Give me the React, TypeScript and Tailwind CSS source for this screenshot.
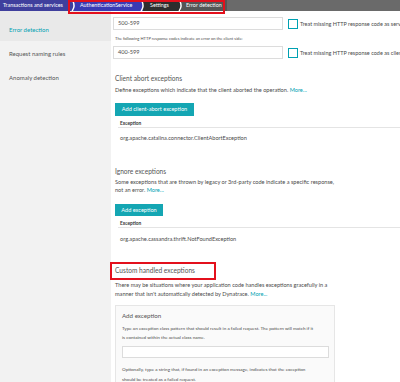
import React from "react";

const Chevron = ({ from, to }: { from: string; to: string }) => (
  <svg width="8" height="11" viewBox="0 0 8 11" className="block shrink-0">
    <rect x="0" y="0" width="4" height="11" fill={from} />
    <rect x="4" y="0" width="4" height="11" fill={to} />
    <path d="M1.5 0 Q5 5.5 1.5 11 L3 11 Q6.5 5.5 3 0 Z" fill="#ffffff" />
  </svg>
);

const Checkbox = () => (
  <div className="w-[10px] h-[10px] border border-[#00a1b2] bg-white shrink-0" />
);

export default function App() {
  return (
    <div className="relative w-[400px] h-[382px] overflow-hidden bg-white font-['Lato',sans-serif] text-[#4b4b4b]">
      {/* breadcrumb */}
      <div className="h-[11px] flex items-stretch bg-[#6a6a6a] text-white text-[5.4px] leading-[11px]">
        <div className="bg-[#3f3f9d] pl-[3px] pr-[3px] w-[70px] whitespace-nowrap">Transactions and services</div>
        <Chevron from="#3f3f9d" to="#3a3ab4" />
        <div className="bg-[#3a3ab4] pl-[2px] w-[61px] whitespace-nowrap">AuthenticationService</div>
        <Chevron from="#3a3ab4" to="#2e2e2e" />
        <div className="bg-[#2e2e2e] pl-[3px] w-[30px] whitespace-nowrap">Settings</div>
        <Chevron from="#2e2e2e" to="#555555" />
        <div className="bg-[#555555] pl-[1px] w-[42px] whitespace-nowrap">Error detection</div>
      </div>

      <div className="flex">
        {/* sidebar */}
        <div className="w-[111px] h-[371px] bg-[#f2f2f2] shrink-0 text-[6px]">
          <div className="h-[30px] pt-[6px] bg-[#e9e9e9] flex items-center pl-[9px] text-[#00a1b2]">Error detection</div>
          <div className="h-[24px] flex items-center pl-[9px] text-[#555]">Request naming rules</div>
          <div className="h-[24px] flex items-center pl-[9px] text-[#555]">Anomaly detection</div>
        </div>

        {/* main */}
        <div className="flex-1 min-w-0 pl-[4px] text-[5.6px] whitespace-nowrap">
          <div className="mt-[6px] flex items-start -ml-[2px]">
            <div className="w-[170px] shrink-0 h-[13px] border border-[#dcdcdc] bg-white pl-[4px] flex items-center text-[5.6px]">500-599</div>
            <div className="ml-[5px] mt-[2px]"><Checkbox /></div>
            <div className="ml-[2px] mt-[2px] leading-[10px] text-[5.5px]">Treat missing HTTP response code as server side error</div>
          </div>
          <div className="mt-[5px] h-[8px] leading-[8px] text-[4.1px]">The following HTTP response codes indicate an error on the client side:</div>
          <div className="mt-[3px] flex items-start -ml-[2px]">
            <div className="w-[170px] shrink-0 h-[13px] border border-[#dcdcdc] bg-white pl-[4px] flex items-center text-[5.6px]">400-599</div>
            <div className="ml-[5px] mt-[2px]"><Checkbox /></div>
            <div className="ml-[2px] mt-[2px] leading-[10px] text-[5.5px]">Treat missing HTTP response code as client side error</div>
          </div>

          <div className="mt-[14px] h-[10px] leading-[10px] text-[6.6px] text-[#555]">Client abort exceptions</div>
          <div className="mt-[3px] h-[8px] leading-[8px]">
            Define exceptions which indicate that the client aborted the operation. <span className="text-[#00a1b2]">More...</span>
          </div>
          <div className="mt-[9px] h-[13px] w-[79px] bg-[#14a6b3] text-white flex items-center justify-center">Add client-abort exception</div>
          <div className="mt-[3px] ml-[3px] h-[9px] border-b border-[#e4e4e4] pl-[2px] leading-[8px] text-[4.8px] font-bold text-[#333]">Exception</div>
          <div className="mt-[6px] ml-[5px] h-[8px] leading-[8px]">org.apache.catalina.connector.ClientAbortException</div>

          <div className="mt-[24px] h-[10px] leading-[10px] text-[6.6px] text-[#555]">Ignore exceptions</div>
          <div className="mt-[2px] leading-[8px]">
            Some exceptions that are thrown by legacy or 3rd-party code indicate a specific response,
            <br />
            not an error. <span className="text-[#00a1b2]">More...</span>
          </div>
          <div className="mt-[10px] h-[12px] w-[48px] bg-[#14a6b3] text-white flex items-center justify-center">Add exception</div>
          <div className="mt-[4px] ml-[3px] h-[8px] border-b border-[#e4e4e4] pl-[2px] leading-[7px] text-[4.8px] font-bold text-[#333]">Exception</div>
          <div className="mt-[7px] ml-[5px] h-[8px] leading-[8px]">org.apache.cassandra.thrift.NotFoundException</div>

          <div className="mt-[19px] -ml-[5px] w-[106px] h-[18px] border-2 border-[#e3101c] pl-[3px] flex items-center text-[6.6px] text-[#555]">Custom handled exceptions</div>
          <div className="leading-[9px]">
            There may be situations where your application code handles exceptions gracefully in a
            <br />
            manner that isn't automatically detected by Dynatrace. <span className="text-[#00a1b2]">More...</span>
          </div>

          <div className="mt-[7px] w-[220px] border border-[#e6e6e6] bg-[#fafafa] pl-[6px] pr-[6px] pt-[5px] pb-[10px]">
            <div className="h-[10px] leading-[10px] text-[6.2px] text-[#555]">Add exception</div>
            <div className="mt-[3px] leading-[9px] text-[4.6px]">
              Type an exception class pattern that should result in a failed request. The pattern will match if it
              <br />
              is contained within the actual class name.
            </div>
            <div className="mt-[4px] h-[12px] w-[207px] border border-[#dcdcdc] bg-white" />
            <div className="mt-[6px] leading-[10px] text-[4.6px]">
              Optionally, type a string that, if found in an exception message, indicates that the exception
              <br />
              should be treated as a failed request.
            </div>
          </div>
        </div>
      </div>

      {/* annotation overlay */}
      <div className="absolute left-[68px] top-0 w-[157px] h-[14px] border-2 border-[#e3101c]" />
    </div>
  );
}
